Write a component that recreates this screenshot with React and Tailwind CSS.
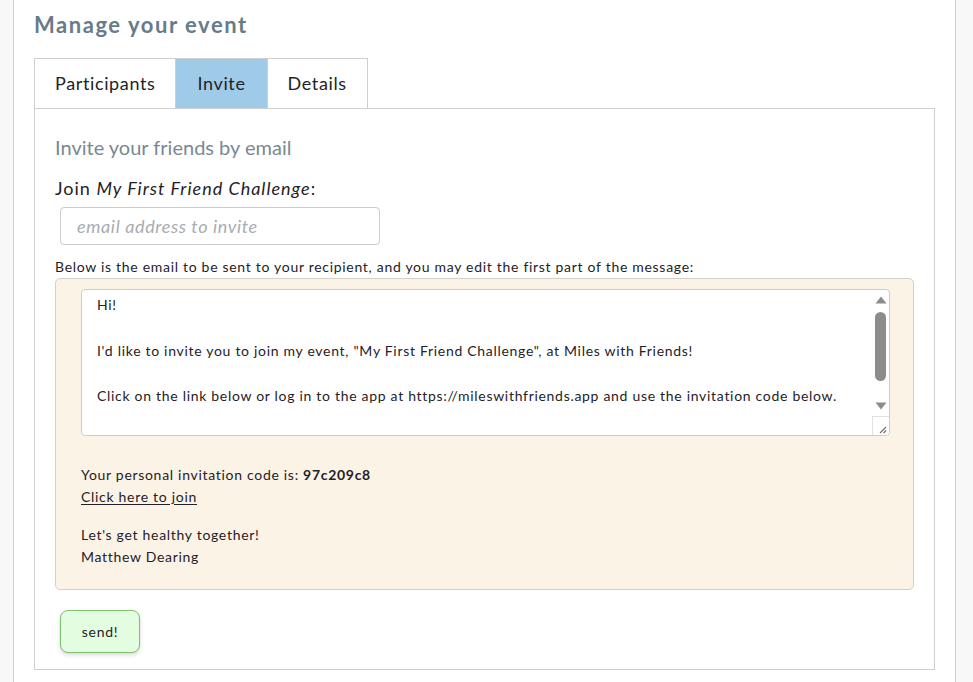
import React from "react";

const lines = [
  "Hi!",
  "",
  "I'd like to invite you to join my event, \"My First Friend Challenge\", at Miles with Friends!",
  "",
  "Click on the link below or log in to the app at https://mileswithfriends.app and use the invitation code below.",
];

function Triangle({ up }) {
  return (
    <svg width="12" height="8" viewBox="0 0 12 8" className="block">
      {up ? <path d="M6 0.5 L11.5 7.5 L0.5 7.5 Z" fill="#8c8c8c" /> : <path d="M0.5 0.5 L11.5 0.5 L6 7.5 Z" fill="#8c8c8c" />}
    </svg>
  );
}

export default function App() {
  return (
    <div className="min-h-[682px] bg-[#f8f8f8] font-['Lato',sans-serif] text-[#1f2228]">
      <div className="ml-[13px] w-[943px] min-h-[682px] border-x border-[#cfcfcf] bg-white px-[20px]">
        <h2 className="pt-[10px] text-[22px] leading-[30px] font-bold tracking-[0.07em] text-[#677b8a]">
          Manage your event
        </h2>
        <div className="mt-[18px] flex h-[51px] text-[18px] tracking-[0.035em]">
          <div className="flex items-center border-y border-l border-[#cfcfcf] px-[20px]">
            Participants
          </div>
          <div className="flex items-center border-y border-l border-[#cfcfcf] bg-[#9fcbe8] px-[21px]">
            Invite
          </div>
          <div className="flex items-center border-y border-x border-[#cfcfcf] px-[20px]">
            Details
          </div>
        </div>
        <div className="-mt-px border border-[#cfcfcf] px-[20px] pt-[24px] pb-[16px]">
          <h4 className="text-[20px] leading-[28px] text-[#7a8894]">Invite your friends by email</h4>
          <div className="mt-[14px] text-[18px] leading-[26px] tracking-[0.055em]">
            Join <i>My First Friend Challenge</i>:
          </div>
          <input
            className="mt-[6px] ml-[5px] block h-[38px] w-[320px] rounded-[4px] border border-[#cccccc] px-[16px] text-[18px] italic tracking-[0.035em] placeholder:text-[#a8acb3] outline-none"
            placeholder="email address to invite"
          />
          <div className="mt-[12px] text-[14px] leading-[20px] tracking-[0.05em]">
            Below is the email to be sent to your recipient, and you may edit the first part of the message:
          </div>
          <div className="mt-[1px] rounded-[5px] border border-[#d3d0ca] bg-[#faf3e6] pt-[10px] pr-[23px] pb-[21px] pl-[25px]">
            <div className="flex h-[147px] overflow-hidden rounded-[4px] border border-[#cccccc] bg-white">
              <div
                className="min-w-0 flex-1 overflow-hidden px-[15px] pt-[4px] text-[14px] leading-[1.625] tracking-[0.05em] outline-none"
                contentEditable
                suppressContentEditableWarning
              >
                {lines.map((l, i) => (
                  <div key={i} className="whitespace-pre-wrap">
                    {l === "" ? "\u00a0" : l}
                  </div>
                ))}
              </div>
              <div className="flex w-[17px] flex-col items-center">
                <div className="pt-[6px] pb-[8px]">
                  <Triangle up />
                </div>
                <div className="h-[69px] w-[11px] rounded-full bg-[#8c8c8c]" />
                <div className="flex-1" />
                <div className="pb-[6px]">
                  <Triangle />
                </div>
                <div className="flex h-[19px] w-full items-end justify-end border-t border-l border-[#e2e2e2] bg-white">
                  <svg width="10" height="10" viewBox="0 0 10 10" className="mr-[2px] mb-[1px]">
                    <path d="M9 3 L3 9 M9 6.5 L6.5 9" stroke="#6f6f6f" strokeWidth="1.1" />
                  </svg>
                </div>
              </div>
            </div>
            <div className="mt-[28px] text-[14px] leading-[22px] tracking-[0.05em]">
              <p>
                <span>Your personal invitation code is: </span>
                <b>97c209c8</b>
              </p>
              <p>
                <a href="#" className="underline underline-offset-2">Click here to join</a>
              </p>
              <p className="mt-[16px]">Let's get healthy together!</p>
              <p>Matthew Dearing</p>
            </div>
          </div>
          <button className="mt-[20px] ml-[5px] h-[43px] w-[80px] rounded-[8px] border border-[#7fbf6e] bg-[#e2fde0] text-[14px] tracking-[0.05em] shadow-[0_2px_4px_rgba(0,0,0,0.15)]">
            send!
          </button>
        </div>
      </div>
    </div>
  );
}
